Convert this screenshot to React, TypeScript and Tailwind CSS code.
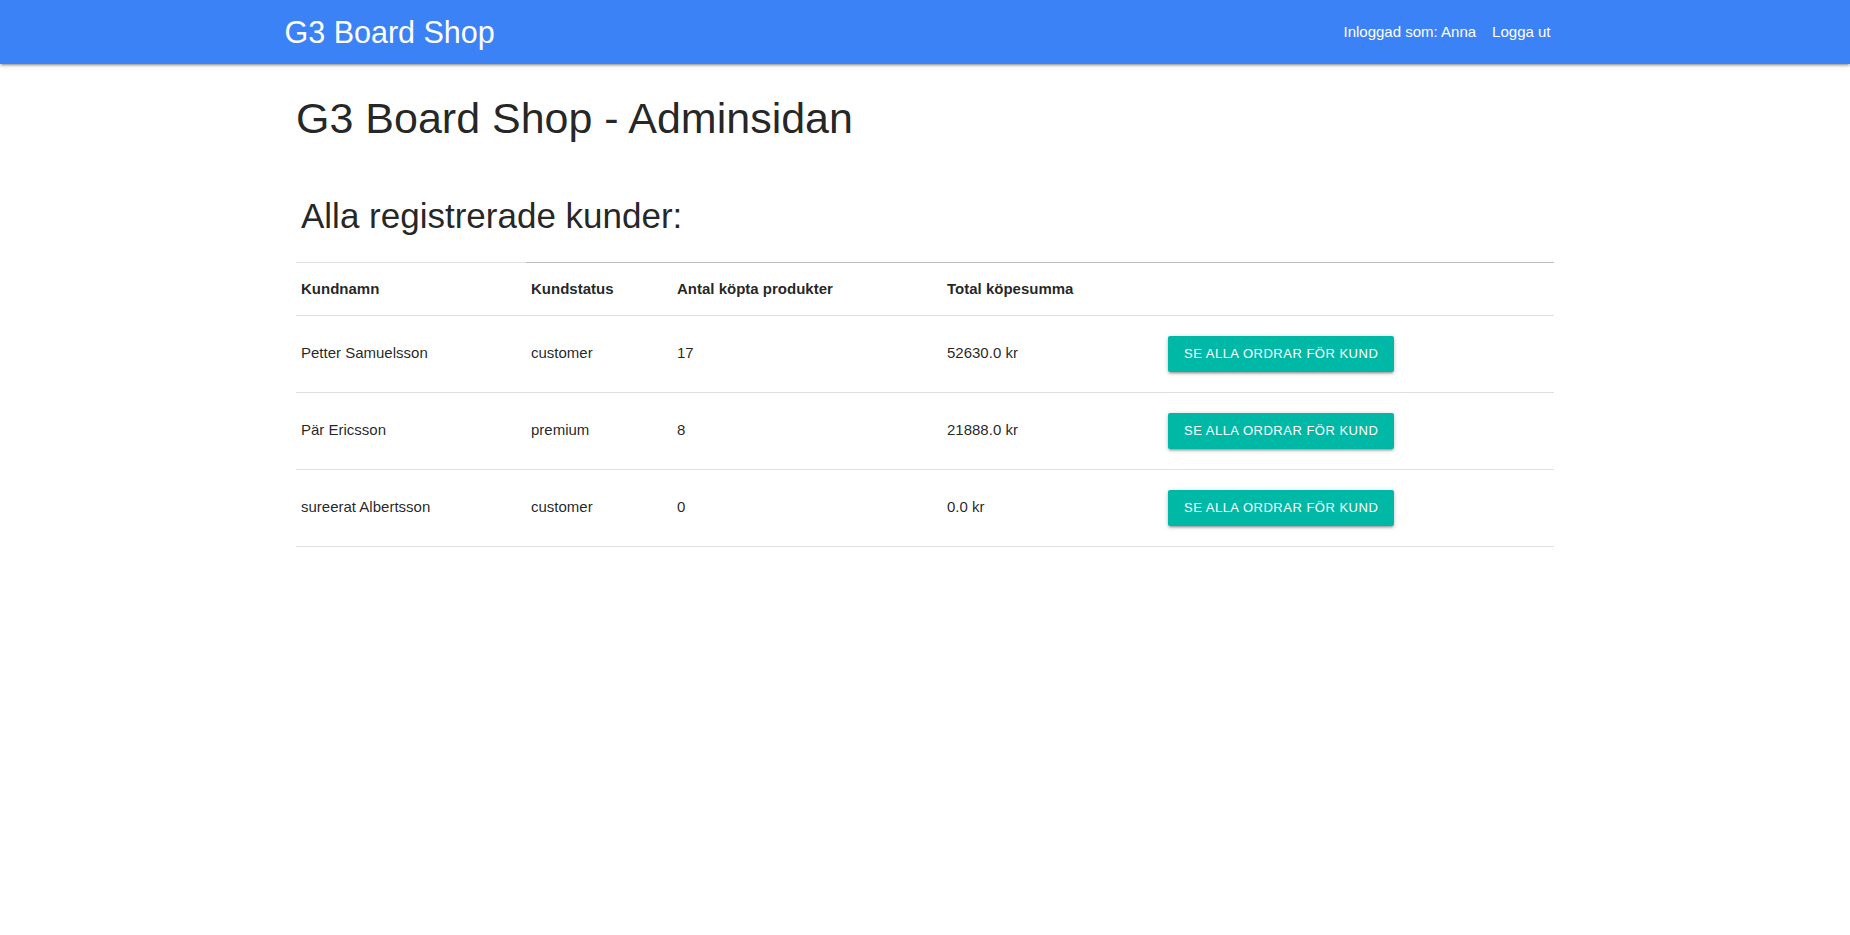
const customers = [
  { name: "Petter Samuelsson", status: "customer", count: 17, total: "52630.0 kr" },
  { name: "Pär Ericsson", status: "premium", count: 8, total: "21888.0 kr" },
  { name: "sureerat Albertsson", status: "customer", count: 0, total: "0.0 kr" },
];

export default function App() {
  return (
    <div className="min-h-[935px] bg-white font-['Liberation_Sans',Arial,sans-serif] text-[15px] text-black/[0.87]">
      {/* Navbar */}
      <nav className="h-16 bg-[#3b82f6] text-white shadow-[0_2px_2px_0_rgba(0,0,0,0.14),0_3px_1px_-2px_rgba(0,0,0,0.12),0_1px_5px_0_rgba(0,0,0,0.2)]">
        <div className="mx-auto flex h-16 w-[70%] items-center justify-between">
          <a href="#" className="pl-[7px] text-[30.5px] leading-[64px]">
            G3 Board Shop
          </a>
          <ul className="flex gap-4 pr-[22px] leading-[64px]">
            <li>Inloggad som: Anna</li>
            <li>
              <a href="#">Logga ut</a>
            </li>
          </ul>
        </div>
      </nav>

      {/* Content */}
      <main className="mx-auto w-[70%] px-[18.5px]">
        <h1 className="mt-[31px] text-[43px] leading-[47px] font-normal">
          G3 Board Shop - Adminsidan
        </h1>

        <h2 className="mt-[55px] ml-[5px] text-[35px] leading-[38.5px] font-normal">
          Alla registrerade kunder:
        </h2>

        <table className="mt-[26px] w-full table-fixed border-collapse text-left">
          <thead>
            <tr className="border-b border-[#e0e0e0]">
              <th className="w-[230px] border-t border-[#e0e0e0] px-[5px] py-[15px] font-bold leading-[22px]">
                Kundnamn
              </th>
              <th className="w-[146px] border-t border-[#bdbdbd] px-[5px] py-[15px] font-bold leading-[22px]">
                Kundstatus
              </th>
              <th className="w-[270px] border-t border-[#bdbdbd] px-[5px] py-[15px] font-bold leading-[22px]">
                Antal köpta produkter
              </th>
              <th className="w-[221px] border-t border-[#bdbdbd] px-[5px] py-[15px] font-bold leading-[22px]">
                Total köpesumma
              </th>
              <th className="border-t border-[#bdbdbd] px-[5px] py-[15px]"></th>
            </tr>
          </thead>
          <tbody>
            {customers.map((c) => (
              <tr key={c.name} className="border-b border-[#e0e0e0]">
                <td className="px-[5px] py-5 align-middle">{c.name}</td>
                <td className="px-[5px] py-5 align-middle">{c.status}</td>
                <td className="px-[5px] py-5 align-middle">{c.count}</td>
                <td className="px-[5px] py-5 align-middle">{c.total}</td>
                <td className="px-[5px] py-5 align-middle">
                  <button className="h-9 rounded-[2px] bg-[#00b8a6] px-4 text-[13px] leading-9 tracking-[0.5px] text-white uppercase shadow-[0_2px_2px_0_rgba(0,0,0,0.14),0_3px_1px_-2px_rgba(0,0,0,0.12),0_1px_5px_0_rgba(0,0,0,0.2)]">
                    Se alla ordrar för kund
                  </button>
                </td>
              </tr>
            ))}
          </tbody>
        </table>
      </main>
    </div>
  );
}
